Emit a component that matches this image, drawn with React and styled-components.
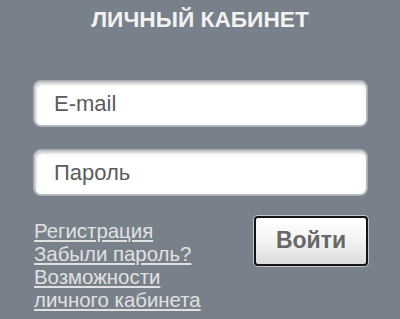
import React from "react";
import styled, { createGlobalStyle } from "styled-components";

const Global = createGlobalStyle`
  html, body {
    margin: 0;
    padding: 0;
    background: #78818b;
  }
  body {
    font-family: "Liberation Sans", Arial, sans-serif;
  }
`;

const Page = styled.div`
  width: 400px;
  height: 319px;
  box-sizing: border-box;
  padding: 4px 33px 0 34px;
  background: #78818b;
  display: flex;
  flex-direction: column;
  overflow: hidden;
`;

const Title = styled.h1`
  margin: 0 0 0 -1px;
  font-size: 22.7px;
  line-height: 30px;
  font-weight: bold;
  color: #f2f2f2;
  text-align: center;
`;

const Field = styled.input`
  box-sizing: border-box;
  width: 333px;
  height: 45px;
  margin-top: ${(p) => p.$gap}px;
  padding: 0 18px 0 19px;
  border: 1px solid #b9bdc1;
  border-radius: 7px;
  background: #fff;
  box-shadow: inset 1px 2px 3px rgba(0, 0, 0, 0.22),
    0 0 0 1px rgba(255, 255, 255, 0.35);
  font-family: "Liberation Sans", Arial, sans-serif;
  font-size: 22px;
  color: #555;
  outline: none;
  &::placeholder {
    color: #5c5c5c;
    opacity: 1;
  }
`;

const BottomRow = styled.div`
  display: flex;
  justify-content: space-between;
  align-items: flex-start;
  width: 334px;
  margin-top: 21px;
`;

const Links = styled.div`
  display: flex;
  flex-direction: column;
  padding-top: 4px;
`;

const Link = styled.a`
  font-size: 20.4px;
  line-height: 23px;
  color: #e1e1e1;
  text-decoration: underline;
  text-underline-offset: 2px;
  cursor: pointer;
`;

const Button = styled.button`
  box-sizing: border-box;
  width: 114px;
  height: 50px;
  border: 2px solid #151515;
  border-radius: 4px;
  background: linear-gradient(#ffffff 0%, #f3f3f3 50%, #dcdcdc 100%);
  box-shadow: 0 0 0 1px rgba(255, 255, 255, 0.55);
  font-family: "Liberation Sans", Arial, sans-serif;
  font-size: 23px;
  font-weight: bold;
  color: #676767;
  padding: 0 0 2px 0;
  cursor: pointer;
`;

export default function App() {
  return (
    <>
      <Global />
      <Page>
        <Title>ЛИЧНЫЙ КАБИНЕТ</Title>
        <Field $gap={47} type="text" placeholder="E-mail" />
        <Field $gap={24} type="password" placeholder="Пароль" />
        <BottomRow>
          <Links>
            <Link>Регистрация</Link>
            <Link>Забыли пароль?</Link>
            <Link>Возможности</Link>
            <Link>личного кабинета</Link>
          </Links>
          <Button>Войти</Button>
        </BottomRow>
      </Page>
    </>
  );
}
